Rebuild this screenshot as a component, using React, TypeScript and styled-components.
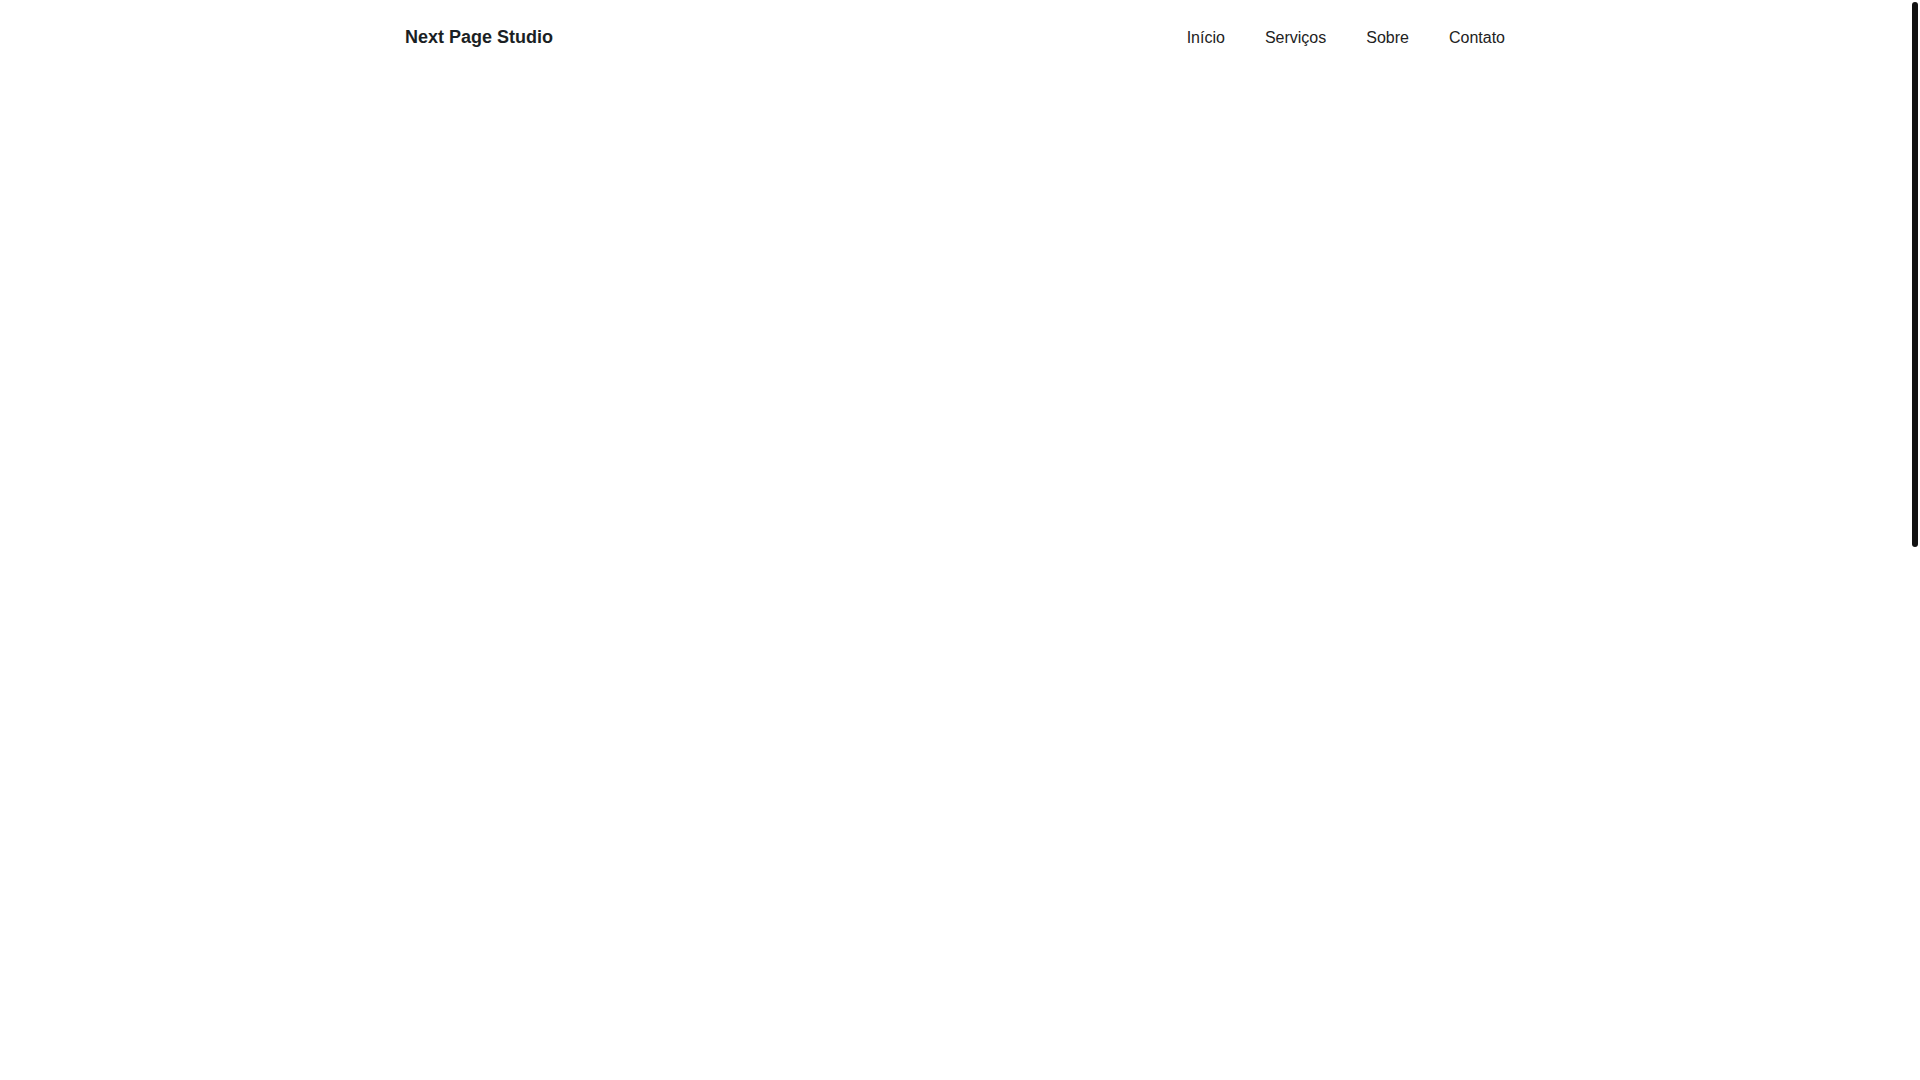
import React from 'react';
import styled, { createGlobalStyle } from 'styled-components';

const GlobalStyle = createGlobalStyle`
    html, body {
        margin: 0;
        padding: 0;
        background: #fff;
        font-family: "Liberation Sans", Arial, sans-serif;
    }
`;

const Page = styled.div`
    display: flex;
    height: 100vh;
    overflow: hidden;
`;

const Content = styled.div`
    flex: 1;
    min-width: 0;
    overflow: hidden;
`;

const ScrollRail = styled.div`
    width: 10px;
    flex-shrink: 0;
    background: #fff;
    padding: 2px 2px 0 2px;
    box-sizing: border-box;
`;

const ScrollThumb = styled.div`
    width: 6px;
    height: 545px;
    background: #111;
    border-radius: 3px;
`;

const Header = styled.header`
    padding: 24px 0;
`;

const Container = styled.div`
    max-width: 1100px;
    margin: 0 auto;
    display: flex;
    align-items: baseline;
    justify-content: space-between;
`;

const Logo = styled.a`
    font-size: 18px;
    font-weight: 700;
    line-height: 26px;
    color: #1b1f24;
    text-decoration: none;
`;

const Nav = styled.nav`
    display: flex;
    align-items: baseline;
    gap: 40px;
`;

const NavLink = styled.a`
    font-size: 16px;
    line-height: 26px;
    color: #222;
    text-decoration: none;
`;

const Main = styled.main`
    min-height: 2066px;
`;

const links = ['Início', 'Serviços', 'Sobre', 'Contato'];

const App = () => {
    return (
        <Page>
            <GlobalStyle />
            <Content>
                <Header>
                    <Container>
                        <Logo href="#">Next Page Studio</Logo>
                        <Nav>
                            {links.map((label) => (
                                <NavLink key={label} href="#">{label}</NavLink>
                            ))}
                        </Nav>
                    </Container>
                </Header>
                <Main />
            </Content>
            <ScrollRail>
                <ScrollThumb />
            </ScrollRail>
        </Page>
    );
};

export default App;
